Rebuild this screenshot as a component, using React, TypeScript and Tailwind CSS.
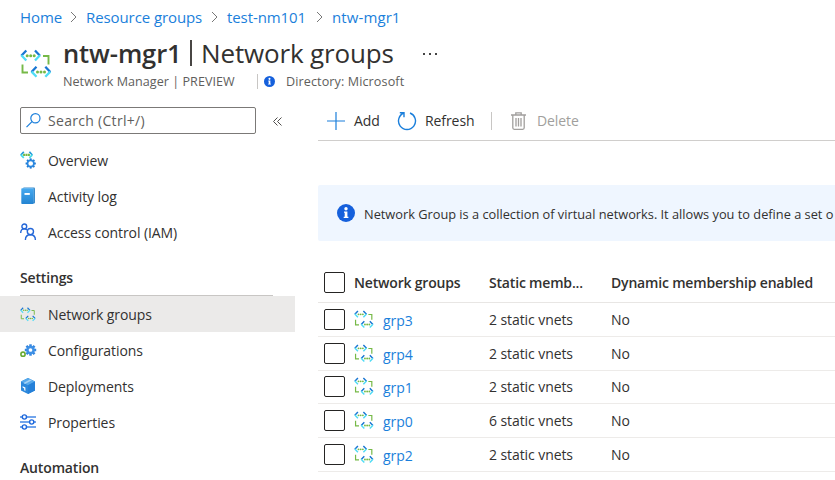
import type { ReactNode } from 'react';

const BLUE = '#1b7fdb';

function NetworkIcon({ className }: { className: string }) {
  return (
    <svg viewBox="0 0 32 30" className={className} fill="none" strokeWidth="2.3">
      <path d="M6.3 1.5 1.3 6.7M15 1.5l5 5.2M16.5 17.8l-5 5.2M25.3 17.8l5 5.2" stroke="#1976d2" />
      <path d="m1.3 6.3 5 5.2M20 6.3l-5 5.2M11.5 22.6l5 5.2M30.3 22.6l-5 5.2" stroke="#50dcf5" />
      <path d="M23 7h5.5v8.5M2.5 15.5v8H8" stroke="#76b947" strokeWidth="1.9" />
      <g fill="#76b947">
        <circle cx="7.2" cy="6.7" r="1.5" /><circle cx="10.7" cy="6.7" r="1.5" /><circle cx="14.2" cy="6.7" r="1.5" />
        <circle cx="17.5" cy="23" r="1.5" /><circle cx="21" cy="23" r="1.5" /><circle cx="24.5" cy="23" r="1.5" />
      </g>
    </svg>
  );
}

function InfoIcon({ className }: { className: string }) {
  return (
    <svg viewBox="0 0 18 18" className={className}>
      <circle cx="9" cy="9" r="9" fill="#1560dc" />
      <circle cx="9" cy="4.7" r="1.7" fill="#fff" />
      <path d="M7 7.5h3.4v5.2h1v1.4H6.7v-1.4h1V8.8H7z" fill="#fff" />
    </svg>
  );
}

function Teeth({ cx, cy, r, color, width }: { cx: number; cy: number; r: number; color: string; width: number }) {
  return (
    <g stroke={color} strokeWidth={width}>
      {[0, 45, 90, 135].map((a) => (
        <path key={a} d={`M${cx - r} ${cy}H${cx + r}`} transform={`rotate(${a} ${cx} ${cy})`} />
      ))}
    </g>
  );
}

const OverviewIcon = (
  <svg viewBox="0 0 17 18" className="h-[18px] w-[17px]" fill="none">
    <path d="M3.8.8.8 4M9.4.8l2.9 3.2" stroke="#1f9bd8" strokeWidth="1.7" />
    <path d="m.8 3.8 3 3M12.3 3.8l-2.9 3" stroke="#45dbe8" strokeWidth="1.7" />
    <path d="M3.1 3.9h6.9" stroke="#76b947" strokeWidth="2.1" strokeDasharray="2 .4" />
    <Teeth cx={10.7} cy={12.5} r={5.1} color="#1976d2" width={1.9} />
    <circle cx="10.7" cy="12.5" r="3.2" fill="#fff" stroke="#2b88e0" strokeWidth="1.7" />
  </svg>
);

const LogIcon = (
  <svg viewBox="0 0 17 18" className="h-[18px] w-[17px]">
    <defs>
      <linearGradient id="book" x2="0" y2="1">
        <stop stopColor="#47aaf0" />
        <stop offset="1" stopColor="#2384d2" />
      </linearGradient>
    </defs>
    <rect x="3" y=".6" width="12" height="16" rx="1" fill="#3c8ccb" />
    <path d="M3.4 1.2h9.9v14H3.4z" fill="#d9effb" />
    <rect x="1.3" y="1.2" width="12.2" height="15.8" rx=".8" fill="url(#book)" />
    <path d="M4.5 6h5.3v1.9H4.5z" fill="#fff" />
  </svg>
);

const AccessIcon = (
  <svg viewBox="0 0 17 18" className="h-[18px] w-[17px]" fill="none" stroke="#2467d8" strokeWidth="1.4">
    <circle cx="4.3" cy="3.4" r="2.4" />
    <path d="M.7 10c0-2.5 1.5-4.1 3.6-4.1 1.1 0 2 .4 2.6 1" />
    <circle cx="10.4" cy="8.6" r="3.1" />
    <path d="M5.4 17c0-3.1 2-5.2 5-5.2s5 2.1 5 5.2" />
  </svg>
);

const ConfigIcon = (
  <svg viewBox="0 0 17 18" className="h-[18px] w-[17px]" fill="none">
    <Teeth cx={10.5} cy={9} r={5.7} color="#3385df" width={2.5} />
    <circle cx="10.5" cy="9" r="3.1" fill="#fff" stroke="#3e90e6" strokeWidth="2.5" />
    <circle cx="3" cy="13.2" r="2.1" fill="#fff" stroke="#68aa32" strokeWidth="1.6" />
  </svg>
);

const DeployIcon = (
  <svg viewBox="0 0 17 18" className="h-[18px] w-[17px]">
    <path d="M8 1 15 4.5v9L8 17 1 13.5v-9z" fill="#2c88dc" />
    <path d="M8 1 15 4.5 8 8.3 1 4.5z" fill="#57a9eb" />
    <path d="M8 8.3 15 4.5v9L8 17z" fill="#2580d8" />
    <path d="m3.5 6 6.4-3.6 2 .9L5 7z" fill="#a6d2f5" />
    <path d="m2.6 9.3 2.8 1.3v3.3l-1.2-.6v-1.9l-1.6-.8z" fill="#fff" />
  </svg>
);

const PropsIcon = (
  <svg viewBox="0 0 17 18" className="h-[18px] w-[17px]" fill="none">
    <path d="M0 4h16M0 9h16M0 14h16" stroke="#72a5ec" strokeWidth="1.8" />
    <g fill="#fff" stroke="#1e68dc" strokeWidth="1.4">
      <circle cx="4.4" cy="4" r="2.1" />
      <circle cx="11.7" cy="9" r="2.1" />
      <circle cx="4.4" cy="14" r="2.1" />
    </g>
  </svg>
);

function NavItem({ icon, label, active = false }: { icon: ReactNode; label: string; active?: boolean }) {
  return (
    <div className={`flex h-9 w-[295px] items-center pl-5 ${active ? 'bg-[#ebeae9]' : ''}`}>
      <span className="flex w-7 shrink-0 items-center">{icon}</span>
      <span className="pt-px">{label}</span>
    </div>
  );
}

function Crumb({ label, width }: { label: string; width: string }) {
  return (
    <span className={`${width} flex shrink-0 items-center justify-between pr-[9px]`}>
      <span>{label}</span>
      <svg viewBox="0 0 7 12" className="h-3 w-[7px]" fill="none" stroke="#777">
        <path d="m1 1 5 5-5 5" />
      </svg>
    </span>
  );
}

function Checkbox() {
  return <span className="h-[21px] w-[21px] shrink-0 rounded-[2px] border border-[#252423] bg-white" />;
}

const rows = [
  ['grp3', '2 static vnets'],
  ['grp4', '2 static vnets'],
  ['grp1', '2 static vnets'],
  ['grp0', '6 static vnets'],
  ['grp2', '2 static vnets'],
];

export default function App() {
  return (
    <div className="h-[480px] w-[835px] overflow-hidden whitespace-nowrap bg-white font-['Open_Sans','Noto_Sans',sans-serif] text-[14px] leading-5 tracking-[-0.08px] text-[#323130]">
      <nav className="flex h-[34px] items-center pl-5 text-[15px] tracking-[-0.09px] text-[#1b7fdb]">
        <Crumb label="Home" width="w-[66px]" />
        <Crumb label="Resource groups" width="w-[141px]" />
        <Crumb label="test-nm101" width="w-[105px]" />
        <span className="tracking-[0.1px]">ntw-mgr1</span>
      </nav>

      <header className="flex h-[73px] pl-5">
        <NetworkIcon className="mt-[15px] h-[30px] w-8 shrink-0" />
        <div className="ml-[11px]">
          <div className="flex h-[38px] items-center text-[26px] leading-9">
            <h1 className="w-[127px] text-[25.5px] font-semibold tracking-[-0.1px]">ntw-mgr1</h1>
            <span className="h-[26px] w-[2px] bg-[#484644]" />
            <span className="ml-[9px] w-[222px] tracking-[-0.15px]">Network groups</span>
            <span className="flex gap-[4px] pt-[2px]">
              <i className="h-[2px] w-[2px] bg-[#444]" />
              <i className="h-[2px] w-[2px] bg-[#444]" />
              <i className="h-[2px] w-[2px] bg-[#444]" />
            </span>
          </div>
          <div className="flex h-5 items-center text-[12.6px] tracking-[0.03px] text-[#605e5c]">
            <span className="w-[194px]">Network Manager | PREVIEW</span>
            <span className="mb-px h-[15px] w-px bg-[#c8c6c4]" />
            <InfoIcon className="mb-[2px] ml-[6px] h-[11px] w-[11px]" />
            <span className="ml-[11px] tracking-[0.1px]">Directory: Microsoft</span>
          </div>
        </div>
      </header>

      <div className="flex">
        <aside className="h-[373px] w-[318px] shrink-0">
          <div className="flex h-[27px] items-center pl-5">
            <div className="flex h-[27px] w-[236px] items-center rounded-[2px] border border-[#7b7977] pl-[5px] text-[#605e5c]">
              <svg viewBox="0 0 15 15" className="h-[15px] w-[15px]" fill="none" stroke={BLUE} strokeWidth="1.2">
                <circle cx="9.4" cy="5.3" r="4.6" />
                <path d="M6 8.6.5 14.1" />
              </svg>
              <span className="ml-[7px] tracking-[0.3px]">Search (Ctrl+/)</span>
            </div>
            <svg viewBox="0 0 9 9" className="ml-[17px] mt-px h-[9px] w-[9px]" fill="none" stroke="#504e4c">
              <path d="m4.5.5-4 4 4 4M8.5.5l-4 4 4 4" />
            </svg>
          </div>
          <div className="pb-px pt-2">
            <NavItem icon={OverviewIcon} label="Overview" />
            <NavItem icon={LogIcon} label="Activity log" />
            <NavItem icon={AccessIcon} label="Access control (IAM)" />
          </div>
          <div className="ml-5 flex h-[45px] w-[253px] items-center border-b border-[#c8c6c4] pt-[10px] font-semibold tracking-[-0.15px]">Settings</div>
          <NavItem icon={<NetworkIcon className="h-[15px] w-4" />} label="Network groups" active />
          <NavItem icon={ConfigIcon} label="Configurations" />
          <NavItem icon={DeployIcon} label="Deployments" />
          <NavItem icon={PropsIcon} label="Properties" />
          <div className="ml-5 pt-[18px] font-semibold tracking-[-0.15px]">Automation</div>
        </aside>

        <main className="w-[517px]">
          <div className="flex h-[34px] items-center border-b border-[#d0cecc] pb-[6px] pl-[9px]">
            <svg viewBox="0 0 18 18" className="h-[18px] w-[18px]" stroke={BLUE} strokeWidth="1.2">
              <path d="M9 0v18M0 9h18" />
            </svg>
            <span className="ml-[9px] w-[43px]">Add</span>
            <svg viewBox="0 0 20 20" className="h-5 w-5" fill="none" stroke={BLUE} strokeWidth="1.4">
              <path d="M13 2a8.5 8.5 0 1 1-6 0M2.8 1.8H7v4.4" />
            </svg>
            <span className="ml-2 w-[66px]">Refresh</span>
            <span className="h-[18px] w-px bg-[#c8c6c4]" />
            <svg viewBox="0 0 15 18" className="ml-[19px] h-[18px] w-[15px]" fill="none" stroke="#a19f9d" strokeWidth="1.3">
              <path d="M0 3h15M4.8 3V.8h5.4V3M1.8 3v12.8q0 1.5 1.5 1.5h8.4q1.5 0 1.5-1.5V3" />
              <path d="M5 6v8.5M7.5 6v8.5M10 6v8.5" />
            </svg>
            <span className="ml-[11px] text-[#a19f9d]">Delete</span>
          </div>

          <div className="mt-11 flex h-14 items-center rounded-l-[2px] bg-[#eff6ff] pl-[19px] text-[12.8px] tracking-[-0.01px]">
            <InfoIcon className="h-[18px] w-[18px] shrink-0" />
            <span className="ml-[9px] pt-[2px]">Network Group is a collection of virtual networks. It allows you to define a set o</span>
          </div>

          <div className="mt-[21px] flex h-[41px] items-center border-b border-[#e8e6e4] pl-[6px] font-semibold tracking-[-0.18px]">
            <Checkbox />
            <span className="ml-[9px] w-[135px] pt-px">Network groups</span>
            <span className="w-[122px] pt-px">Static memb...</span>
            <span className="pt-px">Dynamic membership enabled</span>
          </div>
          {rows.map(([name, members]) => (
            <div key={name} className="flex h-[33.75px] items-center border-b border-[#edebe9] pl-[6px]">
              <Checkbox />
              <NetworkIcon className="ml-[9px] h-[19px] w-5 shrink-0" />
              <span className="ml-[9px] w-[106px] pt-[3px] text-[#1b7fdb]">{name}</span>
              <span className="w-[122px] pt-px">{members}</span>
              <span className="pt-px">No</span>
            </div>
          ))}
        </main>
      </div>
    </div>
  );
}
